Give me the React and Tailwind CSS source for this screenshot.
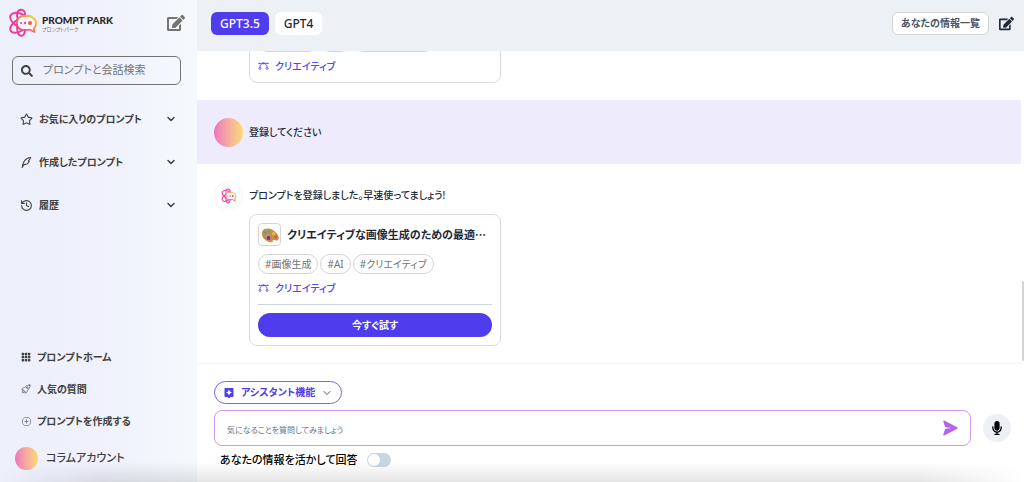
import React, { useState } from 'react';
import { ChevronDown, History, Star } from 'lucide-react';
import { FaEdit, FaMicrophone, FaSearch } from 'react-icons/fa';
import { BsFillGrid3X3GapFill, BsPlusCircle } from 'react-icons/bs';
import { IoRocketOutline } from 'react-icons/io5';
import { MdAssistant } from 'react-icons/md';
import { RiQuillPenLine } from 'react-icons/ri';

const folders = [
  { name: 'お気に入りのプロンプト', icon: Star },
  { name: '作成したプロンプト', icon: RiQuillPenLine },
  { name: '履歴', icon: History },
];

const links = [
  { name: 'プロンプトホーム', icon: BsFillGrid3X3GapFill, size: 10 },
  { name: '人気の質問', icon: IoRocketOutline, size: 10 },
  { name: 'プロンプトを作成する', icon: BsPlusCircle, size: 9 },
];

const tags = ['#画像生成', '#AI', '#クリエイティブ'];

function App() {
  return (
    <div
      lang="ja"
      className="relative flex h-screen overflow-hidden bg-white font-['Noto_Sans','Noto_Sans_CJK_JP',sans-serif] [font-feature-settings:'palt'] text-gray-800"
    >
      <Sidebar />
      <div className="flex min-w-0 flex-1 flex-col">
        <Header />
        <Messages />
        <Composer />
      </div>
      {/* Shade along the bottom edge */}
      <div className="pointer-events-none absolute inset-x-0 bottom-0 h-5 bg-linear-to-t from-black/10 to-transparent mask-x-from-90% mask-x-to-100%" />
    </div>
  );
}

function Logo({ className }) {
  return (
    <svg viewBox="0 0 30 30" fill="none" className={className} aria-hidden="true">
      <defs>
        <linearGradient id="bubble" x1="10" y1="24" x2="24" y2="8" gradientUnits="userSpaceOnUse">
          <stop offset="0" stopColor="#f0389a" />
          <stop offset="0.4" stopColor="#f4607a" />
          <stop offset="1" stopColor="#fbc52e" />
        </linearGradient>
      </defs>
      {/* Orbit loops on the left, above and below the bubble */}
      <g stroke="#f0389a" strokeWidth="1.9" strokeLinecap="round">
        <path d="M9.500 11C8 5 10 1.800 13 1.800s4.500 2.700 4 5.200" />
        <path d="M17 7.500C10 3.500 4.500 4.500 2.800 7c-1.800 3 .7 7 6 11" />
        <path d="M9 12c-5.500 3.500-8 8-6.200 11 1.500 2.500 6.500 2.300 11.500-.5" />
        <path d="M9 17.500c0 6 1.200 10.300 4 10.300 2.200 0 3.500-2 4-5" />
      </g>
      <path
        d="M14.500 8h8L27.500 12l.4 5-2 3.500.6 3.500-4.600-2.200h-7.400a6 6 0 0 1-5.500-6.800c0-4 2.500-7 5.500-7Z"
        fill="#f7f4fc"
        stroke="url(#bubble)"
        strokeWidth="1.800"
        strokeLinejoin="round"
      />
      <circle cx="13" cy="15" r="1" fill="#f0389a" />
      <circle cx="17" cy="15" r="1.200" fill="#f2506a" />
      <circle cx="22" cy="15" r="2" fill="#f4603c" />
    </svg>
  );
}

function Palette() {
  return (
    <svg viewBox="0 0 20 20" className="size-5" aria-hidden="true">
      <path d="M2 7c1-4 7-4.500 11.500-1.500S20 13 18 15c-1.500 1.500-3-.5-4.500 0-1.500.6 0 2.500-2.500 2.300C6 17 .8 12 2 7Z" fill="#c98f4a" />
      <circle cx="5" cy="7.500" r="1.600" fill="#4b9bd8" />
      <circle cx="9" cy="6" r="1.600" fill="#62b44a" />
      <circle cx="13.500" cy="8.500" r="1.500" fill="#e8c33a" />
      <circle cx="16" cy="12" r="1.400" fill="#e0533c" />
      <circle cx="8.500" cy="13" r="1.900" fill="#6a2fc0" />
    </svg>
  );
}

function CategoryIcon() {
  return (
    <svg viewBox="0 0 12 9" fill="none" stroke="currentColor" className="h-2 w-[11px]" aria-hidden="true">
      <path d="M1.500 1.500h9M2 6c0-2.500 1.500-4.500 4-4.500S10 3.500 10 6" />
      <circle cx="2" cy="7.200" r="1.100" />
      <circle cx="10" cy="7.200" r="1.100" />
      <path d="M.3.800h1.600v1.400H.3zM10.100.800h1.600v1.400h-1.600zM5 .500h2v2H5z" fill="currentColor" stroke="none" />
    </svg>
  );
}

function Sidebar() {
  return (
    <aside className="flex w-[197px] shrink-0 flex-col bg-linear-to-r from-[#ecf0fb] via-[#f0f1fc] to-[#f5f9fd] pb-3 text-neutral-700">
      <div className="flex items-center px-2 pt-2">
        <Logo className="size-[30px]" />
        <div className="ml-1 flex-1">
          <h1 className="font-['Lato',sans-serif] text-[10px] leading-3 font-black text-neutral-800">PROMPT PARK</h1>
          <p className="text-[5px] leading-[6px] text-neutral-500">プロンプトパーク</p>
        </div>
        <button aria-label="新規作成" className="mr-1 text-neutral-500">
          <FaEdit size={18} />
        </button>
      </div>

      <label className="mr-4 ml-3 mt-[18px] flex h-[29px] items-center gap-2.5 rounded-md border border-neutral-500 px-2">
        <FaSearch size={12} className="shrink-0" />
        <input
          aria-label="プロンプトと会話検索"
          placeholder="プロンプトと会話検索"
          className="w-full min-w-0 text-[11px] outline-none placeholder:text-neutral-500"
        />
      </label>

      <nav className="mt-[23px] flex flex-col gap-[21px] px-5">
        {folders.map((item) => (
          <button key={item.name} className="flex h-[22px] items-center gap-1.5 text-[10px] font-bold">
            <item.icon size={13} className="shrink-0" />
            {item.name}
            <ChevronDown size={12} strokeWidth={3} className="ml-auto" />
          </button>
        ))}
      </nav>

      <nav className="mt-auto flex flex-col gap-2 px-5">
        {links.map((item) => (
          <a key={item.name} href="#" className="flex h-6 items-center gap-[5px] text-[10px] font-bold">
            <span className="flex w-3 justify-center">
              <item.icon size={item.size} />
            </span>
            {item.name}
          </a>
        ))}
      </nav>

      <a href="#" className="mt-3.5 flex items-center gap-2 px-[15px] text-[11px] font-medium">
        <span className="size-[23px] rounded-full bg-linear-to-r from-[#ee74bd] to-[#fadb70]" />
        コラムアカウント
      </a>
    </aside>
  );
}

function Header() {
  const [model, setModel] = useState('GPT3.5');

  return (
    <header className="flex h-[51px] shrink-0 items-center gap-1.5 bg-[#edf1f6] pr-2.5 pb-1 pl-[14px]">
      <div className="flex flex-1 gap-1.5">
        {['GPT3.5', 'GPT4'].map((name) => (
          <button
            key={name}
            onClick={() => setModel(name)}
            className={`h-[23px] rounded-md px-[9px] text-xs font-medium ${
              model === name ? 'bg-[#4f3ded] text-white' : 'bg-white text-gray-800'
            }`}
          >
            {name}
          </button>
        ))}
      </div>
      <button className="h-[23px] rounded-md border border-neutral-300 bg-white px-2 text-[10px] font-bold text-gray-600">
        あなたの情報一覧
      </button>
      <button aria-label="新しい会話" className="ml-1">
        <FaEdit size={15} />
      </button>
    </header>
  );
}

function PromptCard({ title, action }) {
  return (
    <article className="flex w-[252px] flex-col rounded-lg border border-[#dcdae8] p-2">
      {title && (
        <div className="mb-2 flex items-center gap-1.5">
          <span className="flex size-[23px] shrink-0 items-center justify-center rounded-sm border border-neutral-300">
            <Palette />
          </span>
          <h2 className="font-['Noto_Sans_CJK_JP',sans-serif] text-[11px] font-bold whitespace-nowrap">{title}</h2>
        </div>
      )}
      <ul className="flex gap-0.5">
        {tags.map((tag) => (
          <li key={tag} className="flex h-5 items-center rounded-full border border-neutral-300 px-1.5 text-[10px] text-neutral-500">
            {tag}
          </li>
        ))}
      </ul>
      <p className="mt-1.5 flex h-4 items-center gap-1.5 text-[10px] font-medium text-[#5a48ee]">
        <CategoryIcon />
        クリエイティブ
      </p>
      {action && (
        <div className="mt-2 border-t border-slate-300 pt-2">
          <button className="flex h-6 w-full items-center justify-center rounded-full bg-[#4f3ded] text-[10px] font-bold text-white">
            {action}
          </button>
        </div>
      )}
    </article>
  );
}

function Messages() {
  return (
    <main className="relative flex min-h-0 flex-1 flex-col justify-end overflow-hidden pr-[3px]">
      <div className="pb-[17px] pl-[52px]">
        <PromptCard />
      </div>
      <div className="flex h-16 shrink-0 items-center gap-1.5 bg-[#edebfc] px-[17px] text-[10px] font-medium">
        <span className="size-[29px] rounded-full bg-linear-to-r from-[#ee74bd] to-[#fadb70]" />
        登録してください
      </div>
      <div className="flex gap-1.5 px-[17px] py-[17px]">
        <span className="flex size-[29px] shrink-0 items-center justify-center rounded-full border border-neutral-100">
          <Logo className="size-4" />
        </span>
        <div className="flex flex-col gap-1">
          <p className="flex h-[29px] items-center text-[10px] font-medium">
            プロンプトを登録しました。早速使ってましょう!
          </p>
          <PromptCard title="クリエイティブな画像生成のための最適…" action="今すぐ試す" />
        </div>
      </div>
      {/* Scroll thumb */}
      <div className="absolute right-0 bottom-0.5 h-20 w-0.5 rounded-full bg-neutral-300" />
    </main>
  );
}

function Composer() {
  return (
    <footer className="h-[119px] shrink-0 border-t border-neutral-100 pt-[17px] pr-[13px] pl-[17px]">
      <button className="flex h-[23px] items-center gap-1.5 rounded-full border border-[#7466f1] px-2 text-[10px] font-bold text-[#4f3ded]">
        <MdAssistant size={12} />
        アシスタント機能
        <ChevronDown size={12} className="text-gray-600" />
      </button>
      <div className="mt-1.5 flex items-center gap-3">
        <div className="flex h-9 flex-1 items-center rounded-lg border border-[#cf98ee] px-3">
          <input
            aria-label="質問"
            placeholder="気になることを質問してみましょう"
            className="min-w-0 flex-1 pt-1 text-[8px] outline-none placeholder:text-slate-500"
          />
          <button aria-label="送信" className="text-[#b565e9]">
            <svg viewBox="0 0 15 16" fill="currentColor" className="h-4 w-[15px]">
              <path d="M1.200.6 14.200 7.200q1.200.8 0 1.600L1.200 15.400Q0 15.800.3 14.600L2.200 8.700 8.500 8 2.200 7.300.3 1.400Q0 .2 1.200.6Z" />
            </svg>
          </button>
        </div>
        <button aria-label="音声入力" className="flex size-7 items-center justify-center rounded-full bg-[#edf1f6] text-black">
          <FaMicrophone size={14} />
        </button>
      </div>
      <label className="mt-1.5 flex items-center gap-2.5 pl-1.5 text-[11px] font-medium text-black">
        あなたの情報を活かして回答
        <input
          type="checkbox"
          className="h-3.5 w-6 appearance-none rounded-full bg-slate-300 p-px before:block before:size-3 before:rounded-full before:bg-white checked:bg-[#4f3ded] checked:before:ml-2.5"
        />
      </label>
    </footer>
  );
}

export default App;
